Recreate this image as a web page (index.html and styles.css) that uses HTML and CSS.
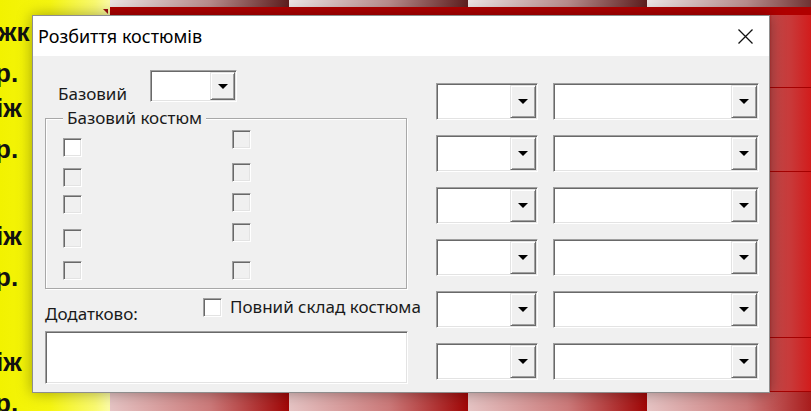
FILE: index.html
```html
<!DOCTYPE html>
<html lang="uk">
<head>
<meta charset="utf-8">
<title>Розбиття костюмів</title>
<link rel="stylesheet" href="styles.css">
</head>
<body>
<div class="sheet">
  <div class="names">
    <div class="ncell n1"><div class="ln o2">жк</div><div class="ln o4">р.</div></div>
    <div class="ncell n2"><div class="ln o3">іж</div><div class="ln o4">р.</div></div>
    <div class="ncell n3"><div class="ln o3">іж</div><div class="ln o4">р.</div></div>
    <div class="ncell n4"><div class="ln o3">іж</div><div class="ln o4">р.</div></div>
  </div>
  <div class="tiles">
    <div class="t-top"></div>
    <div class="t-band"></div>
    <div class="t-row t-r1"></div>
    <div class="t-row t-r2"></div>
    <div class="t-row t-r3"></div>
    <div class="t-row t-r4"></div>
    <div class="t-bottom"></div>
  </div>
</div>

<div class="dialog">
  <div class="titlebar">
    <span class="title">Розбиття костюмів</span>
    <svg class="close" width="15" height="15" viewBox="0 0 15 15"><path d="M0.5 0.5L14.5 14.5M14.5 0.5L0.5 14.5" stroke="#111" stroke-width="1.3" fill="none"/></svg>
  </div>
  <div class="body">
    <div class="left">
      <div class="base-row">
        <span class="label base-label">Базовий</span>
        <div class="combo combo-base"><div class="drop"><i class="arrow"></i></div></div>
      </div>
      <div class="group">
        <span class="legend">Базовий костюм</span>
        <div class="col col-a">
          <span class="cb white"></span>
          <span class="cb mt11"></span>
          <span class="cb mt8"></span>
          <span class="cb mt15"></span>
          <span class="cb mt13"></span>
        </div>
        <div class="col col-b">
          <span class="cb"></span>
          <span class="cb mt14"></span>
          <span class="cb mt11"></span>
          <span class="cb mt11"></span>
          <span class="cb mt19"></span>
        </div>
      </div>
      <div class="extra-row">
        <span class="label extra-label">Додатково:</span>
        <label class="full"><span class="cb white"></span><span class="label">Повний склад костюма</span></label>
      </div>
      <div class="textbox"></div>
    </div>
    <div class="right">
      <div class="combo"><div class="drop"><i class="arrow"></i></div></div>
      <div class="combo"><div class="drop"><i class="arrow"></i></div></div>
      <div class="combo"><div class="drop"><i class="arrow"></i></div></div>
      <div class="combo"><div class="drop"><i class="arrow"></i></div></div>
      <div class="combo"><div class="drop"><i class="arrow"></i></div></div>
      <div class="combo"><div class="drop"><i class="arrow"></i></div></div>
      <div class="combo"><div class="drop"><i class="arrow"></i></div></div>
      <div class="combo"><div class="drop"><i class="arrow"></i></div></div>
      <div class="combo"><div class="drop"><i class="arrow"></i></div></div>
      <div class="combo"><div class="drop"><i class="arrow"></i></div></div>
      <div class="combo"><div class="drop"><i class="arrow"></i></div></div>
      <div class="combo"><div class="drop"><i class="arrow"></i></div></div>
    </div>
  </div>
</div>
</body>
</html>
```

FILE: styles.css
```css
* { box-sizing: border-box; }
html, body { margin: 0; padding: 0; }
body {
  width: 811px;
  height: 411px;
  overflow: hidden;
  position: relative;
  font-family: "Noto Sans", sans-serif;
}

/* spreadsheet background */
.sheet { display: flex; height: 411px; }
.names {
  width: 110px;
  display: flex;
  flex-direction: column;
  background: linear-gradient(90deg, #f2f200 0, #f6f610 50px, #fafa70 95px, #fcfca0 108px);
  font: bold 26px/41px "Liberation Sans", sans-serif;
  color: #111;
}
.ncell { position: relative; overflow: hidden; white-space: nowrap; }
.n1 { height: 88px; padding-top: 12px; }
.n1::after {
  content: "";
  position: absolute;
  right: 2px;
  top: 9px;
  border-top: 5px solid #a01010;
  border-left: 5px solid transparent;
}
.n2 { height: 84px; padding-top: 0; }
.n3 { height: 166px; padding-top: 44px; }
.n4 { flex: 1; padding-top: 4px; }
.ln { height: 41px; }
.o2 { margin-left: -2px; }
.o3 { margin-left: -4px; }
.o4 { margin-left: -5px; }

.tiles { flex: 1; display: flex; flex-direction: column; }
.t-top {
  height: 7px;
  background: repeating-linear-gradient(90deg, #ece4e4 0, #b88c8c 100px, #5e1e1e 179px);
}
.t-band { height: 8px; background: #b00000; }
.t-row {
  background: linear-gradient(90deg, #b80c0c 0, #b80c0c 655px, #c24848 662px, #c83a3a 680px, #d21c1c 701px);
  border-bottom: 1px solid #a60000;
}
.t-r1 { height: 73px; }
.t-r2 { height: 84px; }
.t-r3 { height: 166px; }
.t-r4 { height: 54px; }
.t-bottom {
  flex: 1;
  background: repeating-linear-gradient(90deg, #e6c4c4 0, #cc7a7a 100px, #a00606 179px);
}

/* dialog window */
.dialog {
  position: absolute;
  left: 32px;
  top: 15px;
  width: 738px;
  height: 378px;
  border: 1px solid #8e8e8e;
  background: #f0f0f0;
  box-shadow: 0 0 14px rgba(0, 0, 0, 0.35);
  display: flex;
  flex-direction: column;
}
.titlebar {
  height: 40px;
  background: #fff;
  display: flex;
  align-items: center;
  justify-content: space-between;
  padding: 0 16px 0 5px;
}
.title { font-size: 18px; color: #000; }
.close { display: block; }

.body { flex: 1; display: flex; }
.left {
  width: 403px;
  padding-left: 12px;
  display: flex;
  flex-direction: column;
}
.label { font-size: 17px; line-height: 20px; color: #1a1a1a; white-space: nowrap; }

.base-row {
  margin-top: 14px;
  display: flex;
  align-items: flex-end;
  padding-left: 13px;
}
.base-label { width: 92px; margin-bottom: -2px; }

.combo {
  display: flex;
  justify-content: flex-end;
  background: #fff;
  border: 1px solid;
  border-color: #a0a0a0 #fff #fff #a0a0a0;
  box-shadow: inset 1px 1px 0 #696969, inset -1px -1px 0 #e3e3e3;
  padding: 1px;
}
.combo-base { width: 87px; height: 32px; }
.drop {
  width: 25px;
  background: #f0f0f0;
  border: 1px solid;
  border-color: #e3e3e3 #696969 #696969 #e3e3e3;
  box-shadow: inset 1px 1px 0 #fff, inset -1px -1px 0 #a0a0a0;
  display: flex;
  align-items: center;
  justify-content: center;
}
.arrow {
  display: block;
  width: 0;
  height: 0;
  border-left: 5px solid transparent;
  border-right: 5px solid transparent;
  border-top: 5px solid #000;
}

.group {
  margin-top: 16px;
  width: 362px;
  height: 171px;
  border: 1px solid #a8a8a8;
  box-shadow: inset 1px 1px 0 #fff, 1px 1px 0 #fff;
  position: relative;
  display: flex;
  padding-left: 17px;
}
.legend {
  position: absolute;
  left: 17px;
  top: -11px;
  padding: 0 4px;
  background: #f0f0f0;
  font-size: 17px;
  line-height: 20px;
  color: #1a1a1a;
}
.col { display: flex; flex-direction: column; }
.col-a { margin-top: 19px; }
.col-b { margin-top: 11px; margin-left: 150px; }

.cb {
  display: block;
  width: 19px;
  height: 19px;
  flex: none;
  background: #f0f0f0;
  border: 1px solid;
  border-color: #a0a0a0 #fff #fff #a0a0a0;
  box-shadow: inset 1px 1px 0 #696969, inset -1px -1px 0 #e3e3e3;
}
.cb.white { background: #fff; }
.mt8 { margin-top: 8px; }
.mt11 { margin-top: 11px; }
.mt13 { margin-top: 13px; }
.mt14 { margin-top: 14px; }
.mt15 { margin-top: 15px; }
.mt19 { margin-top: 19px; }

.extra-row {
  height: 42px;
  display: flex;
  align-items: flex-start;
}
.extra-label { width: 158px; margin-top: 15px; }
.full {
  display: flex;
  align-items: center;
  gap: 8px;
  margin-top: 8px;
}

.textbox {
  width: 363px;
  height: 53px;
  background: #fff;
  border: 1px solid;
  border-color: #a0a0a0 #fff #fff #a0a0a0;
  box-shadow: inset 1px 1px 0 #696969, inset -1px -1px 0 #e3e3e3;
}

.right {
  display: grid;
  grid-template-columns: 102px 206px;
  grid-auto-rows: 37px;
  column-gap: 15px;
  row-gap: 15px;
  margin-top: 27px;
  align-content: start;
}
.right .drop { width: 26px; }
```
